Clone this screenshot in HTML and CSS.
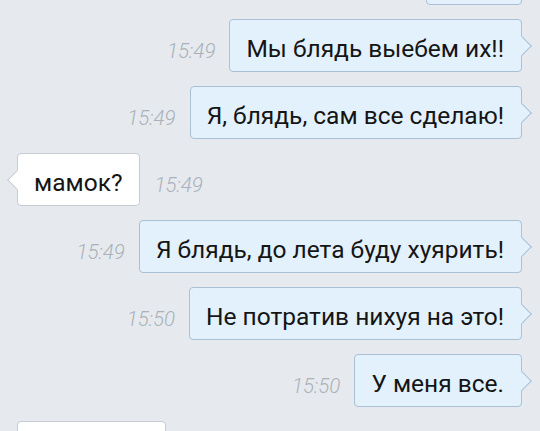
FILE: index.html
```html
<!DOCTYPE html>
<html>
 <head>
     <title>Чат</title>
     <link rel="stylesheet" href="styles.css">
     <meta charset="UTF-8">
 </head>
 <body>
    <div class="chat">
      <div class="row out first">
        <div class="msg"></div>
      </div>
      <div class="row out">
        <span class="time">15:49</span>
        <div class="msg">Мы блядь выебем их!!</div>
      </div>
      <div class="row out">
        <span class="time">15:49</span>
        <div class="msg">Я, блядь, сам все сделаю!</div>
      </div>
      <div class="row in">
        <div class="msg">мамок?</div>
        <span class="time">15:49</span>
      </div>
      <div class="row out">
        <span class="time">15:49</span>
        <div class="msg">Я блядь, до лета буду хуярить!</div>
      </div>
      <div class="row out">
        <span class="time">15:50</span>
        <div class="msg">Не потратив нихуя на это!</div>
      </div>
      <div class="row out">
        <span class="time">15:50</span>
        <div class="msg">У меня все.</div>
      </div>
      <div class="row in last">
        <div class="msg wide"></div>
      </div>
    </div>
 </body>
</html>
```

FILE: styles.css
```css
body {
    margin: 0;
    background: #e6eaef;
    font-family: Roboto, "Liberation Sans", sans-serif;
    overflow: hidden;
    height: 431px;
}
.chat {
    padding: 0 18px 0 17px;
    margin-top: -48px;
}
.row {
    display: flex;
    align-items: baseline;
    gap: 14px;
    margin-bottom: 14px;
}
.row.out { justify-content: flex-end; }
.row.in { justify-content: flex-start; }
.msg {
    position: relative;
    font-size: 24.5px;
    line-height: 28px;
    color: #151515;
    padding: 15px 17px 8px 16px;
    border-radius: 4px;
    white-space: nowrap;
}
.out .msg {
    background: #e2f1fc;
    border: 1px solid #a9c0d5;
}
.in .msg {
    background: #fff;
    border: 1px solid #c6ccd3;
}
.msg::after {
    content: "";
    position: absolute;
    top: 50%;
    width: 13px;
    height: 13px;
    margin-top: -7px;
    background: inherit;
    transform: rotate(45deg);
}
.out .msg::after {
    right: -8px;
    border-top: 1px solid #a9c0d5;
    border-right: 1px solid #a9c0d5;
}
.in .msg::after {
    left: -8px;
    border-bottom: 1px solid #c6ccd3;
    border-left: 1px solid #c6ccd3;
}
.first .msg { width: 61px; height: 28px; }
.wide { width: 114px; height: 28px; }
.last .msg::after { display: none; }
.time {
    font-size: 20.5px;
    font-style: italic;
    font-weight: 300;
    color: #aab1b9;
    position: relative;
    top: 1px;
}
```
